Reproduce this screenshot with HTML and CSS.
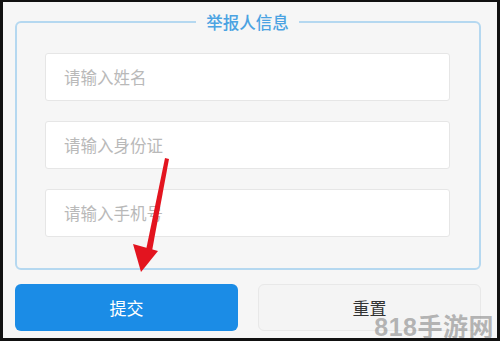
FILE: index.html
```html
<!DOCTYPE html>
<html lang="zh-CN">
<head>
    <meta charset="UTF-8">
    <meta name="viewport" content="width=device-width, initial-scale=1.0">
    <title>举报人信息</title>
    <link rel="stylesheet" href="styles.css">
</head>
<body>
    <div class="frame">
        <form class="report-form">
            <fieldset class="info-box">
                <legend>举报人信息</legend>
                <input type="text" placeholder="请输入姓名">
                <input type="text" placeholder="请输入身份证">
                <input type="text" placeholder="请输入手机号">
            </fieldset>
            <div class="actions">
                <button type="submit" class="btn btn-primary">提交</button>
                <button type="reset" class="btn btn-plain">重置</button>
            </div>
        </form>

        <svg class="arrow" width="500" height="341" viewBox="0 0 500 341">
            <polygon points="165,158 169,159 152,251 146,250" fill="#e3141f"/>
            <polygon points="133,244 158,251 141,272" fill="#e3141f"/>
        </svg>

        <div class="watermark">818手游网</div>
    </div>
</body>
</html>
```

FILE: styles.css
```css
body {
    margin: 0;
    font-family: "Noto Sans CJK SC", "Noto Sans", sans-serif;
}
.frame {
    position: relative;
    box-sizing: border-box;
    width: 500px;
    height: 341px;
    border-style: solid;
    border-color: #111;
    border-width: 2px 3px 3px 3px;
    background-color: #f6f6f6;
    overflow: hidden;
}
.report-form {
    margin: 10px 16px 0 12px;
}
.info-box {
    margin: 0;
    padding: 21px 29px 31px 28px;
    border: 2px solid #b5d8f0;
    border-radius: 6px;
    display: flex;
    flex-direction: column;
    gap: 20px;
}
.info-box legend {
    margin: 0 auto;
    padding: 0 10px;
    font-size: 16.5px;
    font-weight: 500;
    line-height: 20px;
    color: #4ba3e2;
}
.info-box input {
    box-sizing: border-box;
    height: 48px;
    width: 100%;
    padding: 0 18px;
    font-family: inherit;
    font-size: 16.5px;
    background-color: #fff;
    border: 1px solid #e6e6e6;
    border-radius: 3px;
    outline: none;
}
.info-box input::placeholder {
    color: #b9b9b9;
}
.actions {
    display: grid;
    grid-template-columns: 1fr 1fr;
    gap: 20px;
    margin-top: 14px;
}
.btn {
    height: 47px;
    font-family: inherit;
    font-size: 17px;
    border-radius: 6px;
    cursor: pointer;
}
.btn-primary {
    background-color: #1b8ce6;
    color: #fff;
    border: none;
}
.btn-plain {
    background-color: #f4f4f4;
    color: #333;
    border: 1px solid #e8e8e8;
}
.arrow {
    position: absolute;
    left: -3px;
    top: -2px;
    pointer-events: none;
}
.watermark {
    position: absolute;
    right: 3px;
    bottom: -5px;
    font-size: 25px;
    font-weight: bold;
    letter-spacing: 0.5px;
    color: rgba(150, 150, 150, 0.7);
    font-family: "Liberation Sans", "Noto Sans CJK SC", sans-serif;
}
```
